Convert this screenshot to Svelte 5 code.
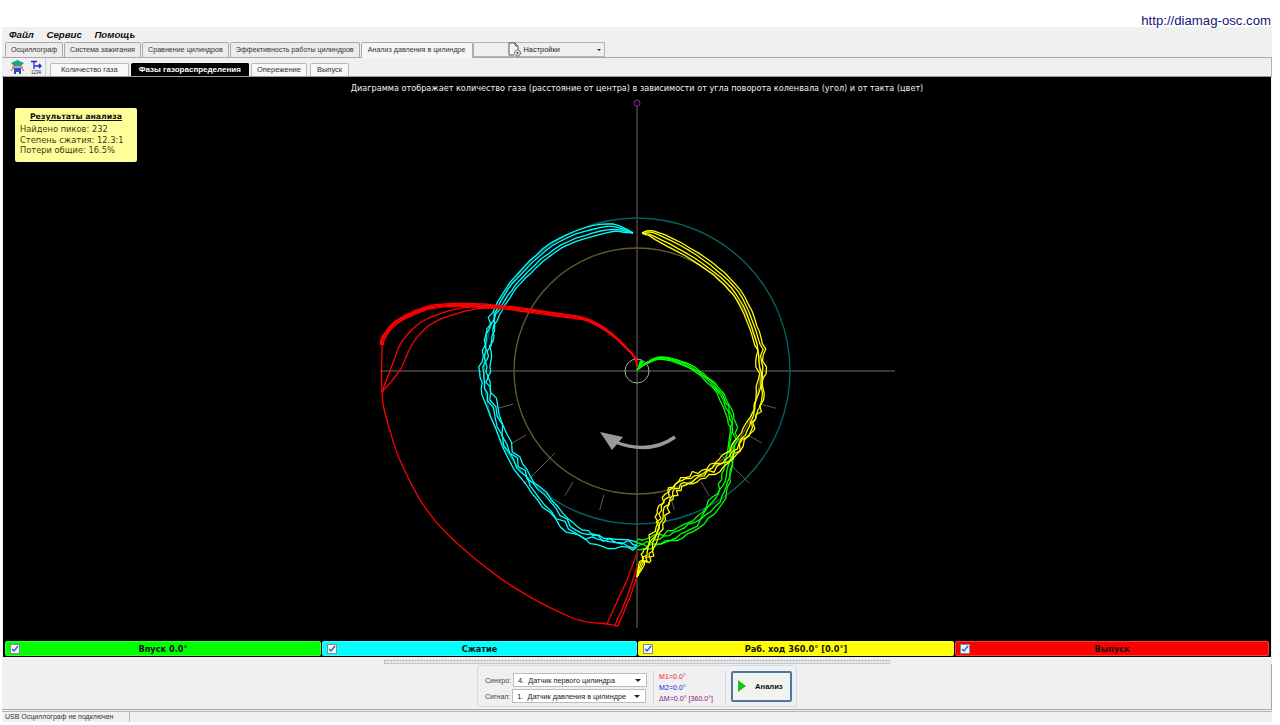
<script lang="ts">
  type Pt = [number, number];

  const CX = 637;
  const CY = 294; // centre of the dial inside the plot (plot starts at y=77)
  const OY = 77;

  const topTabs = [
    "Осциллограф",
    "Система зажигания",
    "Сравнение цилиндров",
    "Эффективность работы цилиндров",
    "Анализ давления в цилиндре",
  ];
  const subTabs = ["Количество газа", "Фазы газораспределения", "Опережение", "Выпуск"];
  const phases = [
    { label: "Впуск 0.0°", color: "#00ff00" },
    { label: "Сжатие", color: "#00ffff" },
    { label: "Раб. ход 360.0° [0.0°]", color: "#ffff00" },
    { label: "Выпуск", color: "#ff0000" },
  ];

  // small seeded random, so each render gives the same traces
  let seed = 7;
  function rnd() {
    seed = (seed * 16807) % 2147483647;
    return seed / 2147483647 - 0.5;
  }

  // catmull-rom resample of the waypoints
  function spline(pts: Pt[], steps = 6): Pt[] {
    const out: Pt[] = [];
    for (let i = 0; i < pts.length - 1; i++) {
      const p0 = pts[Math.max(i - 1, 0)];
      const p1 = pts[i];
      const p2 = pts[i + 1];
      const p3 = pts[Math.min(i + 2, pts.length - 1)];
      for (let s = 0; s < steps; s++) {
        const t = s / steps;
        const t2 = t * t;
        const t3 = t2 * t;
        const f = (a: number, b: number, c: number, d: number) =>
          0.5 * (2 * b + (c - a) * t + (2 * a - 5 * b + 4 * c - d) * t2 + (3 * b - a - 3 * c + d) * t3);
        out.push([f(p0[0], p1[0], p2[0], p3[0]), f(p0[1], p1[1], p2[1], p3[1])]);
      }
    }
    out.push(pts[pts.length - 1]);
    return out;
  }

  // one trace: waypoints in screen coords, offset along the normal, jitter growing with u
  function trace(pts: Pt[], offset: (u: number) => number, noise: (u: number) => number): string {
    const line = spline(pts);
    return line
      .map((p, i) => {
        const a = line[Math.max(i - 1, 0)];
        const b = line[Math.min(i + 1, line.length - 1)];
        const dx = b[0] - a[0];
        const dy = b[1] - a[1];
        const len = Math.hypot(dx, dy) || 1;
        const u = i / (line.length - 1);
        const d = offset(u) + rnd() * noise(u);
        return `${(p[0] - (dy / len) * d).toFixed(1)},${(p[1] - OY + (dx / len) * d).toFixed(1)}`;
      })
      .join(" ");
  }

  const cyanPts: Pt[] = [
    [633, 233], [607, 228], [560, 243], [522, 275], [501, 304], [489, 335], [485, 367],
    [490, 400], [510, 453], [537, 490], [570, 527], [603, 541], [637, 545],
  ];
  const yellowPts: Pt[] = [
    [642, 233], [657, 236], [703, 262], [737, 293], [755, 333], [761, 367], [757, 405],
    [747, 430], [730, 457], [703, 473], [680, 484], [667, 500], [660, 523], [650, 550],
    [642, 563], [637, 577],
  ];
  const greenPts: Pt[] = [
    [637, 370], [647, 363], [663, 358], [690, 367], [713, 385], [727, 407], [733, 433],
    [728, 470], [717, 500], [690, 527], [660, 540], [637, 545],
  ];

  const cyan = [-5, -2, 1.5, 4.5].map((k) =>
    trace(cyanPts, (u) => k * (u < 0.1 ? u * 11 : u < 0.4 ? 1.25 - u * 1.2 : 0.9), (u) => (u < 0.35 ? 0.8 : 5)),
  );
  const yellow = [-5, -2, 1.5, 4.5].map((k) =>
    trace(
      yellowPts,
      (u) => k * (u < 0.08 ? u * 12 : u < 0.45 ? 1.1 - u : u > 0.9 ? (1 - u) * 9 : 0.9),
      (u) => (u < 0.3 ? 0.8 : u > 0.93 ? 0.5 : 5),
    ),
  );
  const green = [-5, -2, 1.5, 5].map((k) =>
    trace(greenPts, (u) => k * Math.min(1, u * 1.3), (u) => (u < 0.25 ? 0.4 : u < 0.5 ? 1.5 : 4)),
  );

  const redHead: Pt[] = [
    [637, 366], [633, 355], [610, 333], [587, 320], [560, 315], [500, 307], [460, 305],
    [427, 308], [397, 322], [384, 337], [382, 345],
  ];
  const redMain = [-1.6, -0.5, 0.5, 1.6].map((k) =>
    trace(redHead, (u) => k * Math.min(1, u * 2.5), () => 0.5),
  );
  const redFolds: Pt[][] = [
    [[500, 307], [462, 308], [425, 320], [403, 340], [393, 363], [382, 392]],
    [[500, 308], [470, 310], [433, 323], [413, 343], [400, 370], [382, 392]],
    [[382, 342], [382, 392], [387, 420], [403, 467], [437, 523], [503, 580], [570, 617], [607, 624], [618, 626]],
    [[607, 624], [620, 595], [627, 580], [637, 553]],
    [[615, 625], [627, 597], [637, 567]],
    [[618, 626], [630, 597], [637, 577]],
  ];
  const red = redFolds.map((p) => trace(p, () => 0, () => 0.3));

  // angle ticks between the two rings, on both sides of the lower half
  const ticks = [15, 30, 45, 60, 75].flatMap((deg) => {
    const a = (deg * Math.PI) / 180;
    const r1 = deg === 45 ? 116 : 128;
    const r2 = deg === 45 ? 159 : 144;
    return [-1, 1].map((side) => ({
      x1: CX + side * r1 * Math.cos(a),
      y1: CY + r1 * Math.sin(a),
      x2: CX + side * r2 * Math.cos(a),
      y2: CY + r2 * Math.sin(a),
    }));
  });
</script>

<div class="page">
  <header class="url-bar">http://diamag-osc.com</header>

  <div class="window">
    <nav class="menu">
      <span>Файл</span>
      <span>Сервис</span>
      <span>Помощь</span>
    </nav>

    <div class="top-tabs">
      {#each topTabs as tab, i}
        <div class="tab" class:active={i === 4}>{tab}</div>
      {/each}
      <div class="settings">
        <svg width="14" height="15" viewBox="0 0 14 15">
          <path d="M1 1h6l3 3v5M1 1v12h5" fill="#fff" stroke="#555" />
          <path d="M7 1v3h3" fill="none" stroke="#555" />
          <circle cx="9.5" cy="11" r="3" fill="#ddd" stroke="#444" stroke-dasharray="1.6 0.6" />
          <circle cx="9.5" cy="11" r="1" fill="#444" />
        </svg>
        <span>Настройки</span>
        <i class="caret small"></i>
      </div>
    </div>

    <div class="sub-row">
      <div class="tools">
        <svg width="15" height="16" viewBox="0 0 15 16">
          <path d="M1 4l6.5-3 6.5 3-3 3H4z" fill="#17a88a" />
          <path d="M2 8h11M4 8L1 12M11 8l3 4" stroke="#e0314a" fill="none" />
          <path d="M4 9h7v6H9v-2H6v2H4z" fill="#2a50c8" />
        </svg>
        <div class="tool-t">
          <svg width="12" height="10" viewBox="0 0 12 10">
            <path d="M1 1.5h6M4 1.5V9M5 6h6M9 4l2 2-2 2" stroke="#1428c8" stroke-width="1.3" fill="none" />
          </svg>
          <span>1234</span>
        </div>
      </div>
      <div class="sub-tabs">
        {#each subTabs as tab, i}
          <div class="sub-tab" class:selected={i === 1}>{tab}</div>
        {/each}
      </div>
    </div>

    <main class="plot">
      <p class="caption">
        Диаграмма отображает количество газа (расстояние от центра) в зависимости от угла поворота коленвала (угол) и от такта (цвет)
      </p>

      <aside class="note">
        <h4>Результаты анализа</h4>
        <div>Найдено пиков: 232</div>
        <div>Степень сжатия: 12.3:1</div>
        <div>Потери общие: 16.5%</div>
      </aside>

      <svg class="dial" width="1268" height="563" viewBox="3 0 1268 563">
        <line x1="380" y1={CY} x2="895" y2={CY} stroke="#6e6e6e" />
        <line x1={CX} y1={CY} x2={CX} y2="551" stroke="#6e6e6e" />
        <line x1={CX} y1="29" x2={CX} y2={CY} stroke="#7a5a7a" />
        <circle cx={CX} cy="26" r="3" fill="none" stroke="#a020a0" />
        <circle cx={CX} cy={CY} r="153" fill="none" stroke="#045f5f" stroke-width="1.4" />
        <circle cx={CX} cy={CY} r="123" fill="none" stroke="#5f5a30" stroke-width="1.4" />
        <circle cx={CX} cy={CY} r="12" fill="none" stroke="#a8a8a8" />
        {#each ticks as t}
          <line x1={t.x1} y1={t.y1} x2={t.x2} y2={t.y2} stroke="#5c5c5c" />
        {/each}

        <path d="M675 360 Q650 378 615 365" fill="none" stroke="#999" stroke-width="3.4" />
        <path d="M600 355 L623 360 L612 373 Z" fill="#999" />

        {#each green as p}<polyline points={p} fill="none" stroke="#00ff00" stroke-width="1.3" />{/each}
        {#each cyan as p}<polyline points={p} fill="none" stroke="#00ffff" stroke-width="1.3" />{/each}
        {#each red as p}<polyline points={p} fill="none" stroke="#ff0000" stroke-width="1.3" />{/each}
        {#each redMain as p}<polyline points={p} fill="none" stroke="#ff0000" stroke-width="1.3" />{/each}
        {#each yellow as p}<polyline points={p} fill="none" stroke="#ffff00" stroke-width="1.3" />{/each}
        <path d="M637 293 L640 283 L644 285 Z" fill="#00ff00" />
      </svg>

      <div class="legend">
        {#each phases as phase}
          <div class="phase" style="background: {phase.color}">
            <span class="check">
              <svg width="8" height="8" viewBox="0 0 8 8">
                <path d="M1 4l2 2 4-5" fill="none" stroke="#2a5fd0" stroke-width="1.4" />
              </svg>
            </span>
            <span>{phase.label}</span>
          </div>
        {/each}
      </div>
    </main>

    <div class="splitter"></div>

    <div class="controls-row">
      <div class="controls">
        <div class="selects">
          <label>Синхро:<span class="select">4.&nbsp; Датчик первого цилиндра<i class="caret"></i></span></label>
          <label>Сигнал:<span class="select">1.&nbsp; Датчик давления в цилиндре<i class="caret"></i></span></label>
        </div>
        <div class="markers">
          <div class="m1">M1=0.0°</div>
          <div class="m2">M2=0.0°</div>
          <div class="dm">ΔM=0.0° [360.0°]</div>
        </div>
        <button class="run">
          <svg width="8" height="12" viewBox="0 0 8 12"><path d="M0 0l8 6-8 6z" fill="#19c319" /></svg>
          <span>Анализ</span>
        </button>
      </div>
    </div>

    <footer class="status">
      <div class="status-cell">USB Осциллограф не подключен</div>
    </footer>
  </div>
</div>

<style>
  :global(body) {
    margin: 0;
    background: #fff;
  }

  .page {
    width: 1280px;
    height: 725px;
    overflow: hidden;
    font-family: "Liberation Sans", Arial, sans-serif;
    color: #222;
  }

  .url-bar {
    height: 27px;
    padding: 14px 9px 0 0;
    box-sizing: border-box;
    text-align: right;
    font-size: 13.2px;
    line-height: 14px;
    color: #14147a;
  }

  .window {
    width: 1270px;
    margin-left: 2px;
    height: 695px;
    background: #f0f0f0;
    display: flex;
    flex-direction: column;
  }

  .menu {
    height: 15px;
    display: flex;
    gap: 12.5px;
    padding-left: 7px;
    align-items: center;
    font: italic bold 9.7px "Liberation Sans", sans-serif;
    color: #111;
  }

  .top-tabs {
    height: 16px;
    display: flex;
    align-items: flex-end;
    padding-left: 3px;
    box-sizing: border-box;
    border-bottom: 1px solid #a8a8a8;
    font-size: 7.15px;
  }

  .tab {
    height: 14px;
    line-height: 14px;
    padding: 0 5px;
    margin-right: 1px;
    border: 1px solid #a9a9a9;
    border-bottom: 0;
    border-radius: 2px 2px 0 0;
    background: #ececec;
    white-space: nowrap;
    color: #333;
  }

  .tab.active {
    height: 15px;
    line-height: 15px;
    padding: 0 6px;
    margin-right: 0;
    background: #f6f6f6;
    margin-bottom: -1px;
  }

  .settings {
    width: 132px;
    height: 15px;
    position: relative;
    display: flex;
    align-items: center;
    gap: 2px;
    padding-left: 34px;
    border: 1px solid #b4b4b4;
    box-sizing: border-box;
    background: #efefef;
    align-self: flex-start;
    font-size: 7.4px;
  }

  .sub-row {
    height: 20px;
    display: flex;
    align-items: flex-end;
    border-bottom: 1px solid #a0a0a0;
    border-right: 1px solid #b4b4b4;
    box-sizing: border-box;
  }

  .tools {
    width: 44px;
    height: 18px;
    display: flex;
    align-items: center;
    gap: 5px;
    padding-left: 8px;
    box-sizing: border-box;
    border-right: 1px solid #cfcfcf;
  }

  .tool-t {
    display: flex;
    flex-direction: column;
    align-items: center;
    line-height: 5px;
    font-size: 4.5px;
    color: #222;
  }

  .tool-t svg {
    display: block;
  }

  .sub-tabs {
    display: flex;
    gap: 2px;
    margin-left: 4px;
    font-size: 7.5px;
  }

  .sub-tab {
    height: 12px;
    line-height: 12px;
    padding: 0 10px;
    border: 1px solid #bbb;
    border-bottom: 0;
    border-radius: 2px 2px 0 0;
    background: #f8f8f8;
    color: #333;
  }

  .sub-tab:nth-child(3) {
    padding: 0 5px;
  }

  .sub-tab:nth-child(4) {
    padding: 0 6px;
    margin-left: 1px;
  }

  .sub-tab.selected {
    background: #000;
    color: #fff;
    font-size: 8px;
    font-weight: bold;
    border-color: #000;
    padding: 0 7px;
  }

  .plot {
    position: relative;
    width: 1268px;
    margin-left: 1px;
    height: 580px;
    flex: none;
    background: #000;
    display: flex;
    flex-direction: column;
  }

  .caption {
    position: absolute;
    top: 6px;
    left: 0;
    right: 0;
    margin: 0;
    text-align: center;
    color: #f2f2f2;
    font: 8.15px "DejaVu Sans", sans-serif;
    line-height: 11px;
  }

  .note {
    position: absolute;
    left: 12px;
    top: 31px;
    width: 122px;
    height: 54px;
    box-sizing: border-box;
    padding: 3px 5px 2px;
    background: #ffff99;
    border-radius: 2px;
    font: 8.3px/10.5px "DejaVu Sans", sans-serif;
    color: #3a3a1a;
  }

  .note h4 {
    margin: 0 0 1px;
    text-align: center;
    font-size: 7.8px;
    line-height: 12px;
    color: #111;
    text-decoration: underline;
  }

  .dial {
    flex: 1;
    display: block;
    min-height: 0;
  }

  .legend {
    height: 17px;
    display: grid;
    grid-template-columns: 317px 316px 317px 315px;
    padding-left: 2px;
    box-sizing: border-box;
  }

  .phase {
    height: 15px;
    margin: 1px 1px 0 0;
    border-radius: 2px;
    display: flex;
    align-items: center;
    position: relative;
    justify-content: center;
    box-shadow: inset 0 0 0 1px rgba(255, 255, 255, 0.22);
    font: bold 8.2px "DejaVu Sans", sans-serif;
    color: #111;
  }

  .check {
    position: absolute;
    left: 5px;
    top: 3px;
    width: 8px;
    height: 8px;
    background: #f4f4f4;
    border: 1px solid #8a8a8a;
    display: block;
    line-height: 0;
  }

  .splitter {
    height: 4px;
    width: 506px;
    margin: 3px 0 0 382px;
    flex: none;
    background: repeating-linear-gradient(90deg, #c5d6ec 0 1px, #eef3fa 1px 3px);
    border: 1px solid #c4c4c4;
    box-sizing: border-box;
  }

  .controls-row {
    height: 46px;
    flex: none;
    padding: 1px 0 0 475px;
    box-sizing: border-box;
    border-bottom: 1px solid #a8a8a8;
    border-right: 1px solid #a8a8a8;
  }

  .controls {
    width: 320px;
    height: 42px;
    border: 1px solid #dadada;
    border-radius: 3px;
    display: flex;
    align-items: center;
    box-sizing: border-box;
    padding-left: 7px;
  }

  .selects {
    display: flex;
    flex-direction: column;
    gap: 2px;
    margin-top: 4px;
    font-size: 7px;
    color: #444;
  }

  .selects label {
    display: flex;
    align-items: center;
    gap: 2px;
  }

  .select {
    position: relative;
    display: block;
    width: 134px;
    height: 14px;
    line-height: 13px;
    padding-left: 4px;
    box-sizing: border-box;
    background: #fff;
    border: 1px solid #bdbdbd;
    color: #222;
    font-size: 7.3px;
  }

  .caret {
    position: absolute;
    right: 5px;
    top: 5px;
    width: 0;
    height: 0;
    border: 3px solid transparent;
    border-top-color: #222;
    border-bottom: 0;
  }

  .caret.small {
    right: 3px;
    top: 6px;
    border-width: 2px;
    border-bottom: 0;
  }

  .markers {
    width: 73px;
    height: 34px;
    margin-left: 6px;
    margin-top: 4px;
    padding-left: 5px;
    box-sizing: border-box;
    border-left: 1px solid #d8d8d8;
    border-right: 1px solid #d8d8d8;
    font-size: 7.1px;
    line-height: 11px;
    display: flex;
    flex-direction: column;
    justify-content: center;
  }

  .m1 {
    color: #e81c1c;
  }

  .m2 {
    color: #2020e0;
  }

  .dm {
    color: #8a208a;
  }

  .run {
    width: 61px;
    height: 31px;
    margin-left: 5px;
    padding: 0 0 0 5px;
    display: flex;
    align-items: center;
    gap: 9px;
    background: #f2f2ee;
    border: 2px solid #4a78a8;
    border-radius: 2px;
    font: bold 7.6px "Liberation Sans", sans-serif;
    color: #111;
  }

  .status {
    height: 11px;
    margin-top: 1px;
    box-sizing: border-box;
    border-top: 1px solid #b4b4b4;
    font-size: 7px;
    line-height: 10px;
    color: #333;
    display: flex;
  }

  .status-cell {
    width: 128px;
    padding-left: 3px;
    box-sizing: border-box;
    border-right: 1px solid #b8b8b8;
  }
</style>
